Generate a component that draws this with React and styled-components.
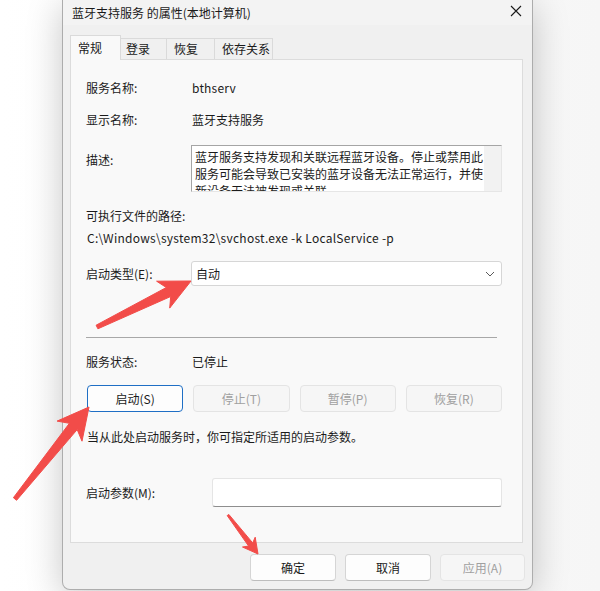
import React from "react";
import styled, { createGlobalStyle } from "styled-components";

const Global = createGlobalStyle`
  html, body { margin: 0; padding: 0; }
  body {
    font-family: "Noto Sans CJK SC", "Noto Sans", sans-serif;
    font-size: 12px;
    color: #1b1b1b;
  }
`;

const Page = styled.div`
  position: relative;
  width: 600px;
  height: 591px;
  overflow: hidden;
  box-sizing: border-box;
  padding-left: 62px;
  background: linear-gradient(90deg, #ffffff 0%, #f6f6f6 100%);
`;

const Dialog = styled.div`
  box-sizing: border-box;
  width: 471px;
  height: 590px;
  display: flex;
  flex-direction: column;
  background: #f0f0f0;
  border: 1px solid rgba(0, 0, 0, 0.28);
  border-top: none;
  border-radius: 0 0 8px 8px;
  box-shadow: 0 6px 36px rgba(0, 0, 0, 0.22);
`;

const TitleBar = styled.div`
  height: 25px;
  display: flex;
  align-items: center;
  justify-content: space-between;
  padding: 0 9px 0 9px;
  background: #f3f3f3;
`;

const Title = styled.div`
  font-size: 12px;
  line-height: 16px;
  color: #1a1a1a;
`;

const Close = styled.div`
  width: 12px;
  height: 12px;
  display: flex;
  margin-top: -4px;
  margin-right: 1px;
`;

const Body = styled.div`
  padding: 10px 9px 0 7px;
  display: flex;
  flex-direction: column;
`;

const TabRow = styled.div`
  position: relative;
  z-index: 2;
  height: 24px;
  display: flex;
  align-items: flex-start;
`;

const Tab = styled.div`
  box-sizing: border-box;
  width: ${(p) => p.$w}px;
  height: ${(p) => (p.$active ? 25 : 21)}px;
  margin-top: ${(p) => (p.$active ? 0 : 3)}px;
  margin-left: ${(p) => (p.$first ? 0 : -1)}px;
  padding-left: ${(p) => p.$pl}px;
  display: flex;
  align-items: center;
  background: ${(p) => (p.$active ? "#f9f9f9" : "#f0f0f0")};
  border: 1px solid #dadada;
  border-bottom: none;
  font-size: 12px;
  line-height: 16px;
  color: #1a1a1a;
`;

const Panel = styled.div`
  box-sizing: border-box;
  height: 484px;
  background: #f9f9f9;
  border: 1px solid #dcdcdc;
  padding: 20px 20px 0 15px;
  display: flex;
  flex-direction: column;
`;

const Row = styled.div`
  display: flex;
  align-items: ${(p) => (p.$top ? "flex-start" : "center")};
  margin-top: ${(p) => p.$mt || 0}px;
  line-height: 16px;
`;

const Label = styled.div`
  flex: none;
  width: ${(p) => p.$w || 106}px;
  padding-top: ${(p) => p.$pt || 0}px;
  line-height: 16px;
`;

const Value = styled.div`
  line-height: 16px;
  letter-spacing: ${(p) => p.$ls || 0}px;
`;

const TextLine = styled.div`
  margin-top: ${(p) => p.$mt || 0}px;
  margin-left: ${(p) => p.$ml || 0}px;
  line-height: 16px;
  white-space: nowrap;
  letter-spacing: ${(p) => p.$ls || 0}px;
`;

const DescBox = styled.div`
  box-sizing: border-box;
  margin-left: -1px;
  width: 312px;
  height: 47px;
  display: flex;
  overflow: hidden;
  background: #ffffff;
  border: 1px solid #e6e6e6;
  border-top-color: #a5a5a5;
  border-left-color: #a5a5a5;
`;

const DescText = styled.div`
  flex: 1;
  padding: 2px 0 0 3px;
  line-height: 17px;
  white-space: nowrap;
  overflow: hidden;
`;

const ScrollTrack = styled.div`
  flex: none;
  width: 17px;
  background: #f2f2f2;
`;

const Select = styled.div`
  box-sizing: border-box;
  margin-left: -1px;
  width: 313px;
  height: 25px;
  display: flex;
  align-items: center;
  justify-content: space-between;
  padding: 0 6px 0 4px;
  background: #ffffff;
  border: 1px solid #d6d6d6;
  border-radius: 3px;
`;

const Separator = styled.div`
  margin-top: ${(p) => p.$mt}px;
  margin-right: 5px;
  height: 1px;
  background: #a8a8a8;
`;

const ButtonGrid = styled.div`
  margin-top: ${(p) => p.$mt}px;
  margin-left: 1px;
  display: grid;
  grid-template-columns: repeat(4, 1fr);
  column-gap: 10px;
`;

const Button = styled.div`
  box-sizing: border-box;
  height: 27px;
  width: ${(p) => (p.$w ? `${p.$w}px` : "auto")};
  display: flex;
  align-items: center;
  justify-content: center;
  border-radius: 4px;
  font-size: 12px;
  line-height: 16px;
  background: ${(p) => (p.$disabled ? "#f6f6f6" : "#fdfdfd")};
  color: ${(p) => (p.$disabled ? "#a0a0a0" : "#1a1a1a")};
  border: 1px solid
    ${(p) => (p.$focus ? "#1f6fc5" : p.$disabled ? "#e4e4e4" : "#d5d5d5")};
  border-bottom-color: ${(p) =>
    p.$focus ? "#1f6fc5" : p.$disabled ? "#e4e4e4" : "#bdbdbd"};
`;

const Input = styled.div`
  box-sizing: border-box;
  width: 290px;
  height: 29px;
  background: #ffffff;
  border: 1px solid #e5e5e5;
  border-bottom-color: #8e8e8e;
  border-radius: 3px;
`;

const Footer = styled.div`
  display: flex;
  justify-content: flex-end;
  gap: 9px;
  padding-top: 11px;
  margin-right: -2px;
`;

const Overlay = styled.svg`
  position: absolute;
  left: 0;
  top: 0;
  width: 600px;
  height: 591px;
  pointer-events: none;
`;

function arrowPoints(tail, tip, headLen, headHalf, neckHalf, tailHalf, notch) {
  const dx = tip[0] - tail[0];
  const dy = tip[1] - tail[1];
  const len = Math.hypot(dx, dy);
  const ux = dx / len;
  const uy = dy / len;
  const nx = -uy;
  const ny = ux;
  const H = [tip[0] - ux * headLen, tip[1] - uy * headLen];
  const N = [tip[0] - ux * (headLen - notch), tip[1] - uy * (headLen - notch)];
  const pts = [
    [tail[0] + nx * tailHalf, tail[1] + ny * tailHalf],
    [N[0] + nx * neckHalf, N[1] + ny * neckHalf],
    [H[0] + nx * headHalf, H[1] + ny * headHalf],
    tip,
    [H[0] - nx * headHalf, H[1] - ny * headHalf],
    [N[0] - nx * neckHalf, N[1] - ny * neckHalf],
    [tail[0] - nx * tailHalf, tail[1] - ny * tailHalf],
  ];
  return pts.map((p) => `${p[0].toFixed(1)},${p[1].toFixed(1)}`).join(" ");
}

const arrows = [
  { tail: [97, 327], tip: [191, 281], hl: 31, hh: 15, nh: 5, th: 2, notch: 6 },
  { tail: [15, 499], tip: [89, 407], hl: 31, hh: 16, nh: 5, th: 2, notch: 6 },
  { tail: [228, 515], tip: [258, 554], hl: 15, hh: 8, nh: 2.6, th: 1, notch: 3 },
];

const tabs = [
  { label: "常规", w: 51, pl: 7, active: true },
  { label: "登录", w: 47, pl: 5 },
  { label: "恢复", w: 49, pl: 7 },
  { label: "依存关系", w: 59, pl: 7 },
];

export default function App() {
  return (
    <>
      <Global />
      <Page>
        <Dialog>
          <TitleBar>
            <Title>蓝牙支持服务 的属性(本地计算机)</Title>
            <Close>
              <svg width="12" height="12" viewBox="0 0 12 12">
                <path d="M1 1 L11 11 M11 1 L1 11" stroke="#1a1a1a" strokeWidth="1.1" fill="none" />
              </svg>
            </Close>
          </TitleBar>
          <Body>
            <TabRow>
              {tabs.map((t, i) => (
                <Tab key={t.label} $w={t.w} $pl={t.pl} $active={t.active} $first={i === 0}>
                  {t.label}
                </Tab>
              ))}
            </TabRow>
            <Panel>
              <Row>
                <Label>服务名称:</Label>
                <Value $ls={0.2}>bthserv</Value>
              </Row>
              <Row $mt={16}>
                <Label>显示名称:</Label>
                <Value>蓝牙支持服务</Value>
              </Row>
              <Row $mt={17} $top>
                <Label $pt={7}>描述:</Label>
                <DescBox>
                  <DescText>
                    蓝牙服务支持发现和关联远程蓝牙设备。停止或禁用此
                    <br />
                    服务可能会导致已安装的蓝牙设备无法正常运行，并使
                    <br />
                    新设备无法被发现或关联。
                  </DescText>
                  <ScrollTrack />
                </DescBox>
              </Row>
              <TextLine $mt={16}>可执行文件的路径:</TextLine>
              <TextLine $mt={6} $ml={1} $ls={0.26}>
                C:\Windows\system32\svchost.exe -k LocalService -p
              </TextLine>
              <Row $mt={15}>
                <Label>启动类型(E):</Label>
                <Select>
                  <span>自动</span>
                  <svg width="10" height="6" viewBox="0 0 10 6">
                    <path d="M1 1 L5 5 L9 1" stroke="#5a5a5a" strokeWidth="1" fill="none" />
                  </svg>
                </Select>
              </Row>
              <Separator $mt={51} />
              <Row $mt={16}>
                <Label>服务状态:</Label>
                <Value>已停止</Value>
              </Row>
              <ButtonGrid $mt={15}>
                <Button $focus>启动(S)</Button>
                <Button $disabled>停止(T)</Button>
                <Button $disabled>暂停(P)</Button>
                <Button $disabled>恢复(R)</Button>
              </ButtonGrid>
              <TextLine $mt={17} $ml={1}>
                当从此处启动服务时，你可指定所适用的启动参数。
              </TextLine>
              <Row $mt={33}>
                <Label $w={126}>启动参数(M):</Label>
                <Input />
              </Row>
            </Panel>
            <Footer>
              <Button $w={86}>确定</Button>
              <Button $w={86}>取消</Button>
              <Button $w={85} $disabled>应用(A)</Button>
            </Footer>
          </Body>
        </Dialog>
        <Overlay viewBox="0 0 600 591">
          {arrows.map((a, i) => (
            <polygon
              key={i}
              points={arrowPoints(a.tail, a.tip, a.hl, a.hh, a.nh, a.th, a.notch)}
              fill="#f24c49"
              strokeLinejoin="round"
              stroke="#f24c49"
              strokeWidth="1"
            />
          ))}
        </Overlay>
      </Page>
    </>
  );
}
